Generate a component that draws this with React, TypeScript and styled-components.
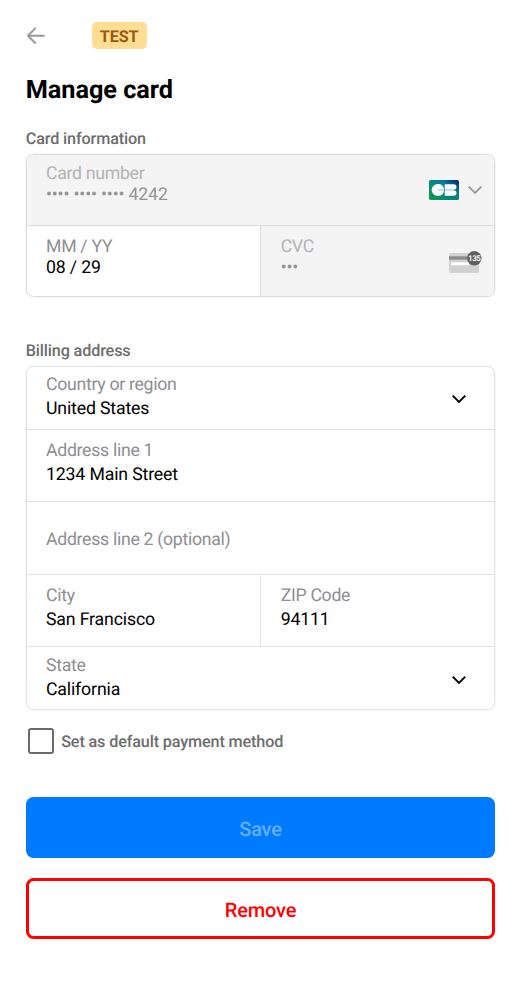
import React from "react";
import styled, { createGlobalStyle, css } from "styled-components";

const GlobalStyle = createGlobalStyle`
  * { box-sizing: border-box; }
  body {
    margin: 0;
    background: #fff;
    font-family: Roboto, "Liberation Sans", sans-serif;
    text-rendering: geometricPrecision;
  }
`;

const Screen = styled.main`
  display: flex;
  flex-direction: column;
  width: 521px;
  height: 1000px;
  padding: 22px 25.7px 0;
  background: #fff;
`;

const TopBar = styled.header`
  display: flex;
  align-items: center;
  gap: 46px;
  height: 27px;
`;

const BackButton = styled.button`
  display: flex;
  width: 20px;
  height: 20px;
  padding: 0;
  border: 0;
  background: none;
`;

const TestBadge = styled.span`
  width: 55px;
  height: 27px;
  border-radius: 5px;
  background: #ffdd93;
  color: #97590b;
  font-size: 16.2px;
  font-weight: 700;
  line-height: 30px;
  letter-spacing: -0.1px;
  text-align: center;
`;

const Title = styled.h1`
  margin: 27px 0 0;
  font-size: 25.3px;
  font-weight: 700;
  line-height: 30px;
  letter-spacing: -0.05px;
  color: #000;
`;

const SectionLabel = styled.h2<{ $top: number }>`
  margin: ${(p) => p.$top}px 0 5px;
  font-size: 16.2px;
  font-weight: 500;
  line-height: 20px;
  letter-spacing: -0.13px;
  color: #6d6d6d;
`;

const FieldGroup = styled.section<{ $tone: string }>`
  --line: ${(p) => p.$tone};
  display: flex;
  flex-direction: column;
  border: 1px solid var(--line);
  border-radius: 7.5px;
  box-shadow: 0 0 0 0.3px var(--line);
  overflow: hidden;
`;

const Row = styled.div<{ $height: number }>`
  display: flex;
  height: ${(p) => p.$height}px;
  & + & { border-top: 1px solid var(--line); }
`;

const Field = styled.label<{ $top: number; $disabled?: boolean; $leading?: number; $end?: number }>`
  display: flex;
  flex: 1 1 0;
  justify-content: space-between;
  padding: ${(p) => p.$top}px ${(p) => p.$end ?? 12}px 0 19.3px;
  font-size: 17.7px;
  line-height: ${(p) => p.$leading ?? 24}px;
  --label: #8e8e92;
  --value: #000;
  ${(p) => p.$disabled && css`
    background: #f4f4f4;
    --label: #b3b3b5;
    --value: #949494;
  `}
  & + & { border-left: 1px solid var(--line); padding-left: 20px; }
`;

const FieldText = styled.span`
  display: flex;
  flex-direction: column;
`;

const FieldLabel = styled.span`
  color: var(--label);
  letter-spacing: -0.3px;
`;

const FieldValue = styled.span`
  color: var(--value);
  letter-spacing: -0.15px;
`;

const Adornment = styled.span<{ $top: number }>`
  display: flex;
  align-items: center;
  align-self: flex-start;
  gap: 8px;
  margin-top: ${(p) => p.$top}px;
`;

const CheckRow = styled.label`
  display: flex;
  align-items: center;
  gap: 7.5px;
  margin: 18px 0 0 2px;
  height: 26px;
  font-size: 16.2px;
  font-weight: 500;
  line-height: 20px;
  letter-spacing: -0.14px;
  color: #6d6d6d;
`;

const CheckText = styled.span`
  padding-top: 2px;
`;

const CheckBox = styled.span`
  width: 26px;
  height: 26px;
  border: 2px solid #6b6b6b;
  border-radius: 3px;
`;

const Action = styled.button<{ $kind: "primary" | "danger" }>`
  height: 61px;
  flex: none;
  padding: 2px 0 0;
  border-radius: 7.5px;
  font: 500 20px/24px Roboto, "Liberation Sans", sans-serif;
  letter-spacing: -0.18px;
  text-rendering: inherit;
  ${(p) => p.$kind === "primary" ? css`
    margin-top: 43px;
    border: 0;
    background: #007aff;
    color: #66afff;
  ` : css`
    margin-top: 20px;
    border: 3px solid #f00;
    background: #fff;
    color: #f00;
  `}
`;

const Chevron = ({ color }: { color: string }) => (
  <svg width="16" height="12" viewBox="0 0 16 12" fill="none">
    <path d="M1.7 2.7 8 9l6.3-6.3" stroke={color} strokeWidth="1.9" />
  </svg>
);

const BackIcon = () => (
  <svg width="20" height="20" viewBox="0 0 20 20" fill="none" stroke="#999" strokeWidth="2" strokeLinecap="round" strokeLinejoin="round">
    <path d="M17.9 9.7H1.9M9.2 2.4 1.9 9.7l7.3 7.3" />
  </svg>
);

const CartesBancairesIcon = () => (
  <svg width="30" height="20" viewBox="0 0 30 20">
    <defs>
      <linearGradient id="cb" x1="2" y1="22" x2="26" y2="-3" gradientUnits="userSpaceOnUse">
        <stop offset="0" stopColor="#0a9c45" />
        <stop offset=".3" stopColor="#05916c" />
        <stop offset=".65" stopColor="#007f9f" />
        <stop offset="1" stopColor="#04256b" />
      </linearGradient>
      <radialGradient id="cbShade" cx="26" cy="18" r="15" gradientUnits="userSpaceOnUse">
        <stop offset="0" stopColor="#078573" />
        <stop offset="1" stopColor="#078573" stopOpacity="0" />
      </radialGradient>
    </defs>
    <rect width="30" height="20" rx="1.8" fill="url(#cb)" />
    <rect width="30" height="20" rx="1.8" fill="url(#cbShade)" />
    <path fill="#fff" d="M15 9.7V8.9A6.1 6.1 0 0 0 8.8 4 6.1 6.1 0 0 0 2.6 10a6.1 6.1 0 0 0 6.2 6 6.1 6.1 0 0 0 6.2-4.9v-.8H9V9.7ZM15.7 4.2h9a2.7 2.7 0 0 1 0 5.5h-9ZM15.7 10.3h9a2.7 2.7 0 0 1 0 5.5h-9Z" />
  </svg>
);

const SecurityCodeIcon = () => (
  <svg width="33" height="22" viewBox="0 0 33 22">
    <rect y="2" width="30" height="20" rx="2" fill="#d1d1d1" />
    <rect y="5.3" width="30" height="3.4" fill="#8c8c8c" />
    <rect x="2" y="11.3" width="18" height="3" fill="#fff" />
    <circle cx="25.3" cy="7.3" r="7.2" fill="#606060" />
    <text x="25.2" y="10.1" textAnchor="middle" fontFamily="Roboto, sans-serif" fontSize="8" fontWeight="700" letterSpacing="-.5" fill="#f3f3f3">135</text>
  </svg>
);

interface EntryProps {
  label: string;
  value?: string;
  top: number;
  leading?: number;
  disabled?: boolean;
  end?: number;
  iconTop?: number;
  children?: React.ReactNode;
}

const Entry = ({ label, value, top, leading, disabled, end, iconTop = 0, children }: EntryProps) => (
  <Field $top={top} $leading={leading} $disabled={disabled} $end={end}>
    <FieldText>
      <FieldLabel>{label}</FieldLabel>
      {value && <FieldValue>{value}</FieldValue>}
    </FieldText>
    {children && <Adornment $top={iconTop}>{children}</Adornment>}
  </Field>
);

export default function App() {
  return (
    <>
      <GlobalStyle />
      <Screen>
        <TopBar>
          <BackButton aria-label="Back"><BackIcon /></BackButton>
          <TestBadge>TEST</TestBadge>
        </TopBar>
        <Title>Manage card</Title>
        <SectionLabel $top={23}>Card information</SectionLabel>
        <FieldGroup $tone="#dcdcdc">
          <Row $height={70}>
            <Entry label="Card number" value="•••• •••• •••• 4242" top={9} leading={21} disabled iconTop={16} end={11.5}>
              <CartesBancairesIcon />
              <Chevron color="#999" />
            </Entry>
          </Row>
          <Row $height={71}>
            <Entry label="MM / YY" value="08 / 29" top={11} leading={21} />
            <Entry label="CVC" value="•••" top={11} leading={21} disabled iconTop={14}>
              <SecurityCodeIcon />
            </Entry>
          </Row>
        </FieldGroup>
        <SectionLabel $top={44}>Billing address</SectionLabel>
        <FieldGroup $tone="#e3e3e3">
          <Row $height={62}>
            <Entry label="Country or region" value="United States" top={6} iconTop={19.5} end={27.5}>
              <Chevron color="#000" />
            </Entry>
          </Row>
          <Row $height={72}>
            <Entry label="Address line 1" value="1234 Main Street" top={9} />
          </Row>
          <Row $height={73}>
            <Entry label="Address line 2 (optional)" top={26} />
          </Row>
          <Row $height={72}>
            <Entry label="City" value="San Francisco" top={9} />
            <Entry label="ZIP Code" value="94111" top={9} />
          </Row>
          <Row $height={63}>
            <Entry label="State" value="California" top={8} leading={23.5} iconTop={19} end={27.5}>
              <Chevron color="#000" />
            </Entry>
          </Row>
        </FieldGroup>
        <CheckRow><CheckBox /><CheckText>Set as default payment method</CheckText></CheckRow>
        <Action $kind="primary">Save</Action>
        <Action $kind="danger">Remove</Action>
      </Screen>
    </>
  );
}
